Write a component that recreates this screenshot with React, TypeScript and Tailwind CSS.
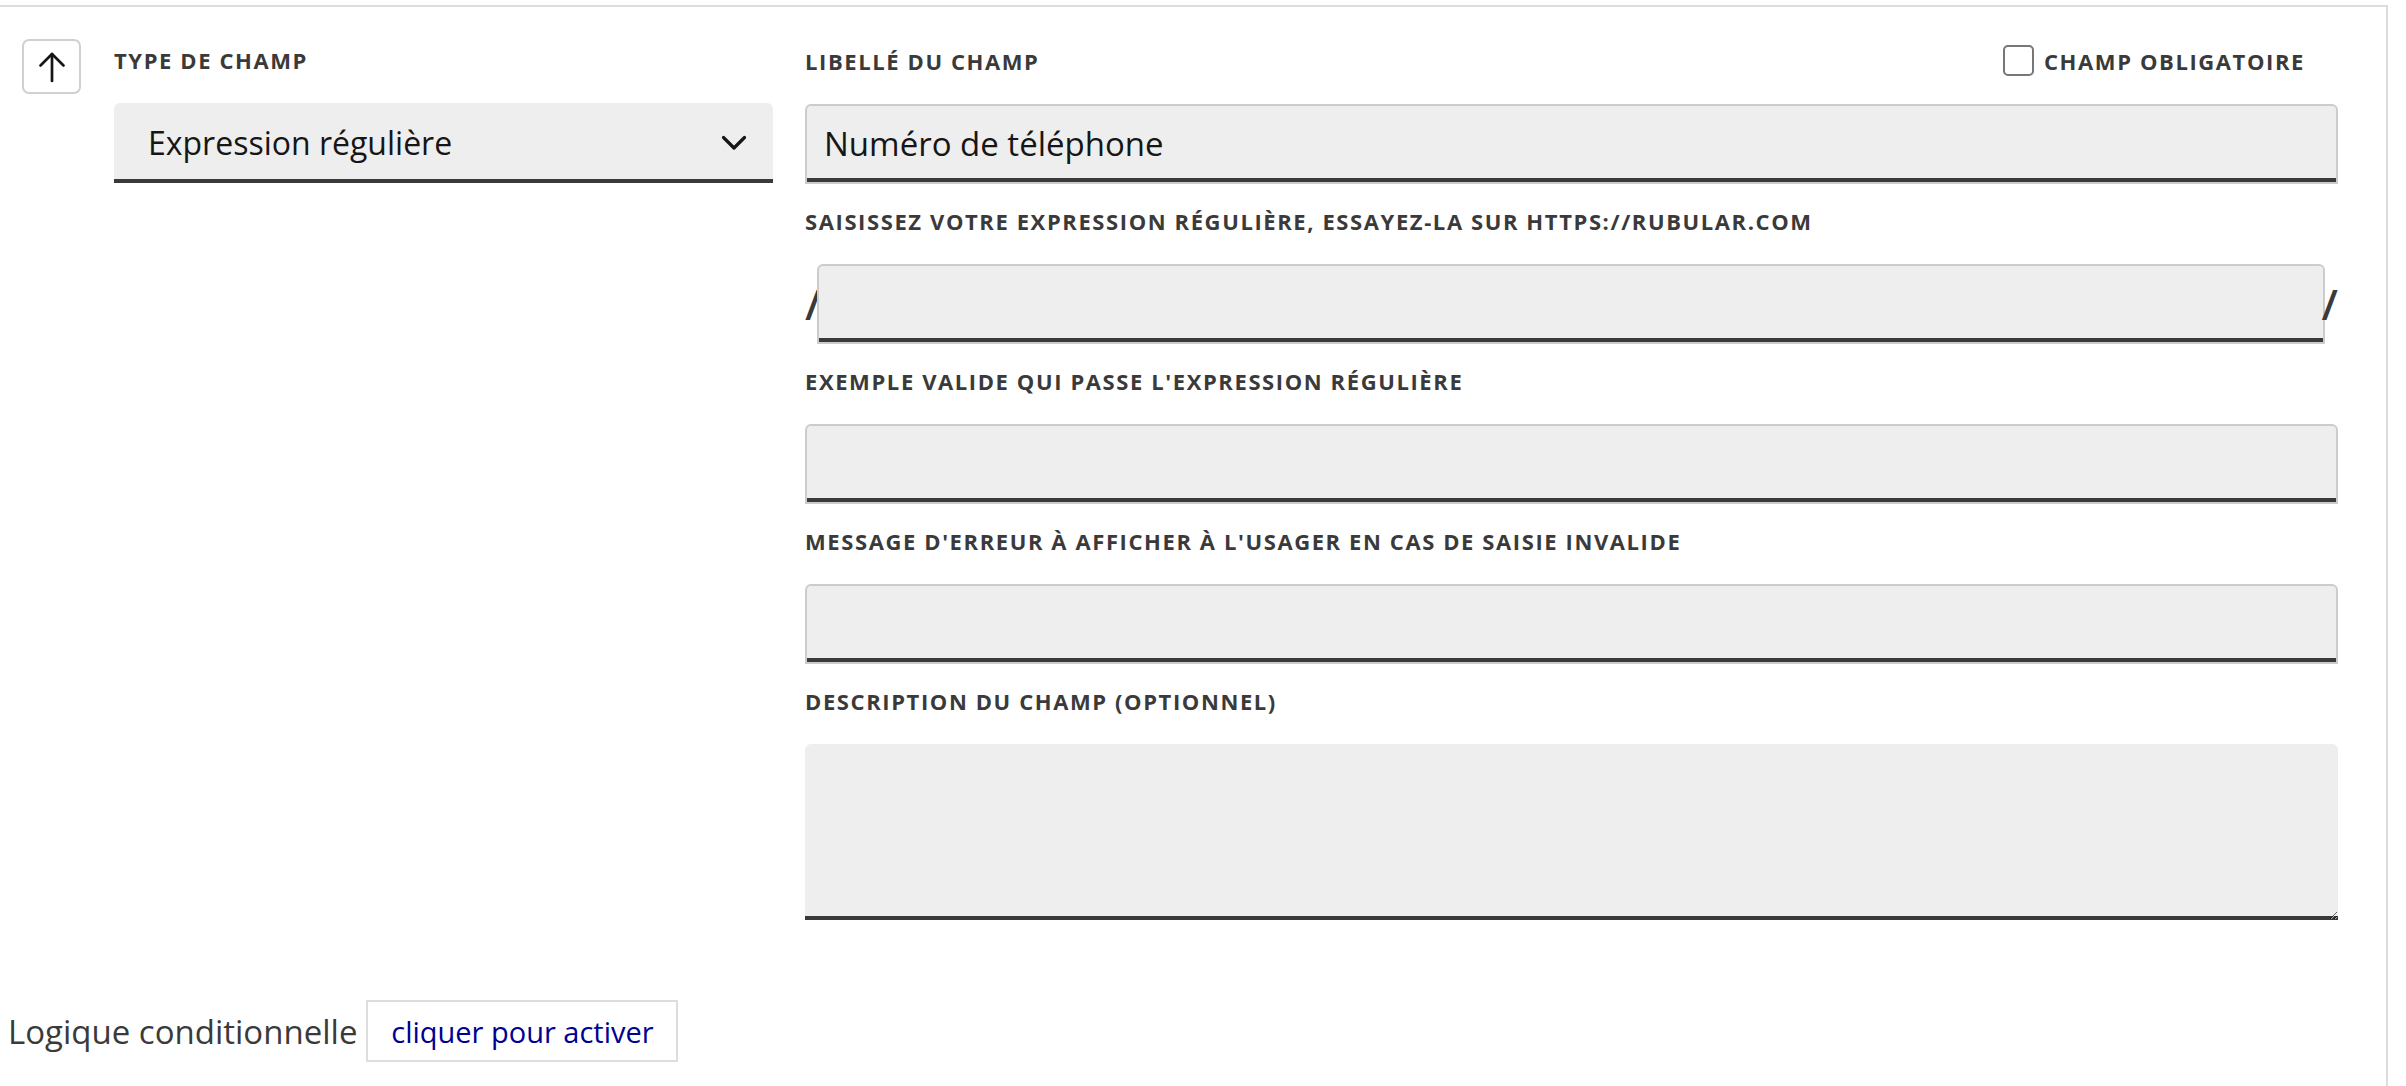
import React from "react";

function Label({ children }: { children: React.ReactNode }) {
  return (
    <div className="h-[30px] flex items-center text-[22px] font-bold uppercase tracking-[1.6px] text-[#3a3a3a] leading-none whitespace-nowrap">
      {children}
    </div>
  );
}

const inputCls =
  "block w-full h-[80px] bg-[#eeeeee] border-2 border-[#cccccc] rounded-t-[6px] shadow-[inset_0_-4px_0_0_#3a3a3a] px-[17px] pb-[2px] text-[33px] text-[#161616] outline-none font-['Open_Sans',sans-serif]";

export default function App() {
  return (
    <div className="w-[2406px] h-[1086px] bg-white overflow-hidden font-['Open_Sans',sans-serif]">
      <div className="mt-[5px] w-[2388px] border-t-2 border-r-2 border-[#dddddd] pl-[8px] pt-[32px] pb-[40px]">
        <div className="flex items-start">
          <div className="ml-[14px] w-[59px] h-[55px] shrink-0 border-2 border-[#d0d0d0] rounded-[7px] flex items-center justify-center">
            <svg width="28" height="32" viewBox="0 0 28 32" fill="none" stroke="#161616" strokeWidth="2.7" strokeLinecap="round" strokeLinejoin="round">
              <path d="M14 3 V30" />
              <path d="M2.5 14.5 L14 3 L25.5 14.5" />
            </svg>
          </div>
          <div className="ml-[33px] w-[659px] shrink-0 pt-[6px]">
            <Label>Type de champ</Label>
            <div className="mt-[28px] h-[80px] bg-[#eeeeee] rounded-t-[6px] shadow-[inset_0_-4px_0_0_#3a3a3a] flex items-center justify-between pl-[34px] pr-[26px]">
              <span className="text-[32px] text-[#161616]">Expression régulière</span>
              <svg width="26" height="16" viewBox="0 0 26 16" fill="none" stroke="#161616" strokeWidth="3.2" strokeLinecap="round" strokeLinejoin="round">
                <path d="M2.5 2.5 L13 13 L23.5 2.5" />
              </svg>
            </div>
          </div>
          <div className="ml-[32px] flex-1 pr-[48px] pt-[6px]">
            <div className="flex items-center justify-between">
              <Label>Libellé du champ</Label>
              <div className="flex items-center mr-[33px] gap-[10px]">
                <div className="w-[31px] h-[31px] border-2 border-[#777777] rounded-[5px] bg-white" />
                <Label>Champ obligatoire</Label>
              </div>
            </div>
            <input className={`mt-[28px] ${inputCls}`} defaultValue="Numéro de téléphone" readOnly />

            <div className="mt-[22px]">
              <Label>Saisissez votre expression régulière, essayez-la sur https://rubular.com</Label>
            </div>
            <div className="mt-[28px] flex items-center h-[80px]">
              <span className="w-[12px] shrink-0 text-[42px] font-semibold leading-none text-[#3a3a3a] flex justify-start">/</span>
              <input className={`flex-1 ${inputCls}`} defaultValue="" readOnly />
              <span className="w-[13px] shrink-0 text-[42px] font-semibold leading-none text-[#3a3a3a] flex justify-end">/</span>
            </div>

            <div className="mt-[22px]">
              <Label>Exemple valide qui passe l'expression régulière</Label>
            </div>
            <input className={`mt-[28px] ${inputCls}`} defaultValue="" readOnly />

            <div className="mt-[22px]">
              <Label>Message d'erreur à afficher à l'usager en cas de saisie invalide</Label>
            </div>
            <input className={`mt-[28px] ${inputCls}`} defaultValue="" readOnly />

            <div className="mt-[22px]">
              <Label>Description du champ (optionnel)</Label>
            </div>
            <textarea
              className="mt-[28px] block w-full h-[176px] bg-[#eeeeee] rounded-t-[6px] shadow-[inset_0_-4px_0_0_#3a3a3a] outline-none p-[16px] text-[32px]"
              defaultValue=""
              readOnly
            />
          </div>
        </div>

        <div className="mt-[80px] flex items-center">
          <span className="text-[33px] text-[#3a3a3a] leading-none">Logique conditionnelle</span>
          <div className="ml-[9px] w-[312px] h-[62px] border-2 border-[#dddddd] flex items-center justify-center">
            <span className="text-[29px] text-[#000091] leading-none">cliquer pour activer</span>
          </div>
        </div>
      </div>
    </div>
  );
}
